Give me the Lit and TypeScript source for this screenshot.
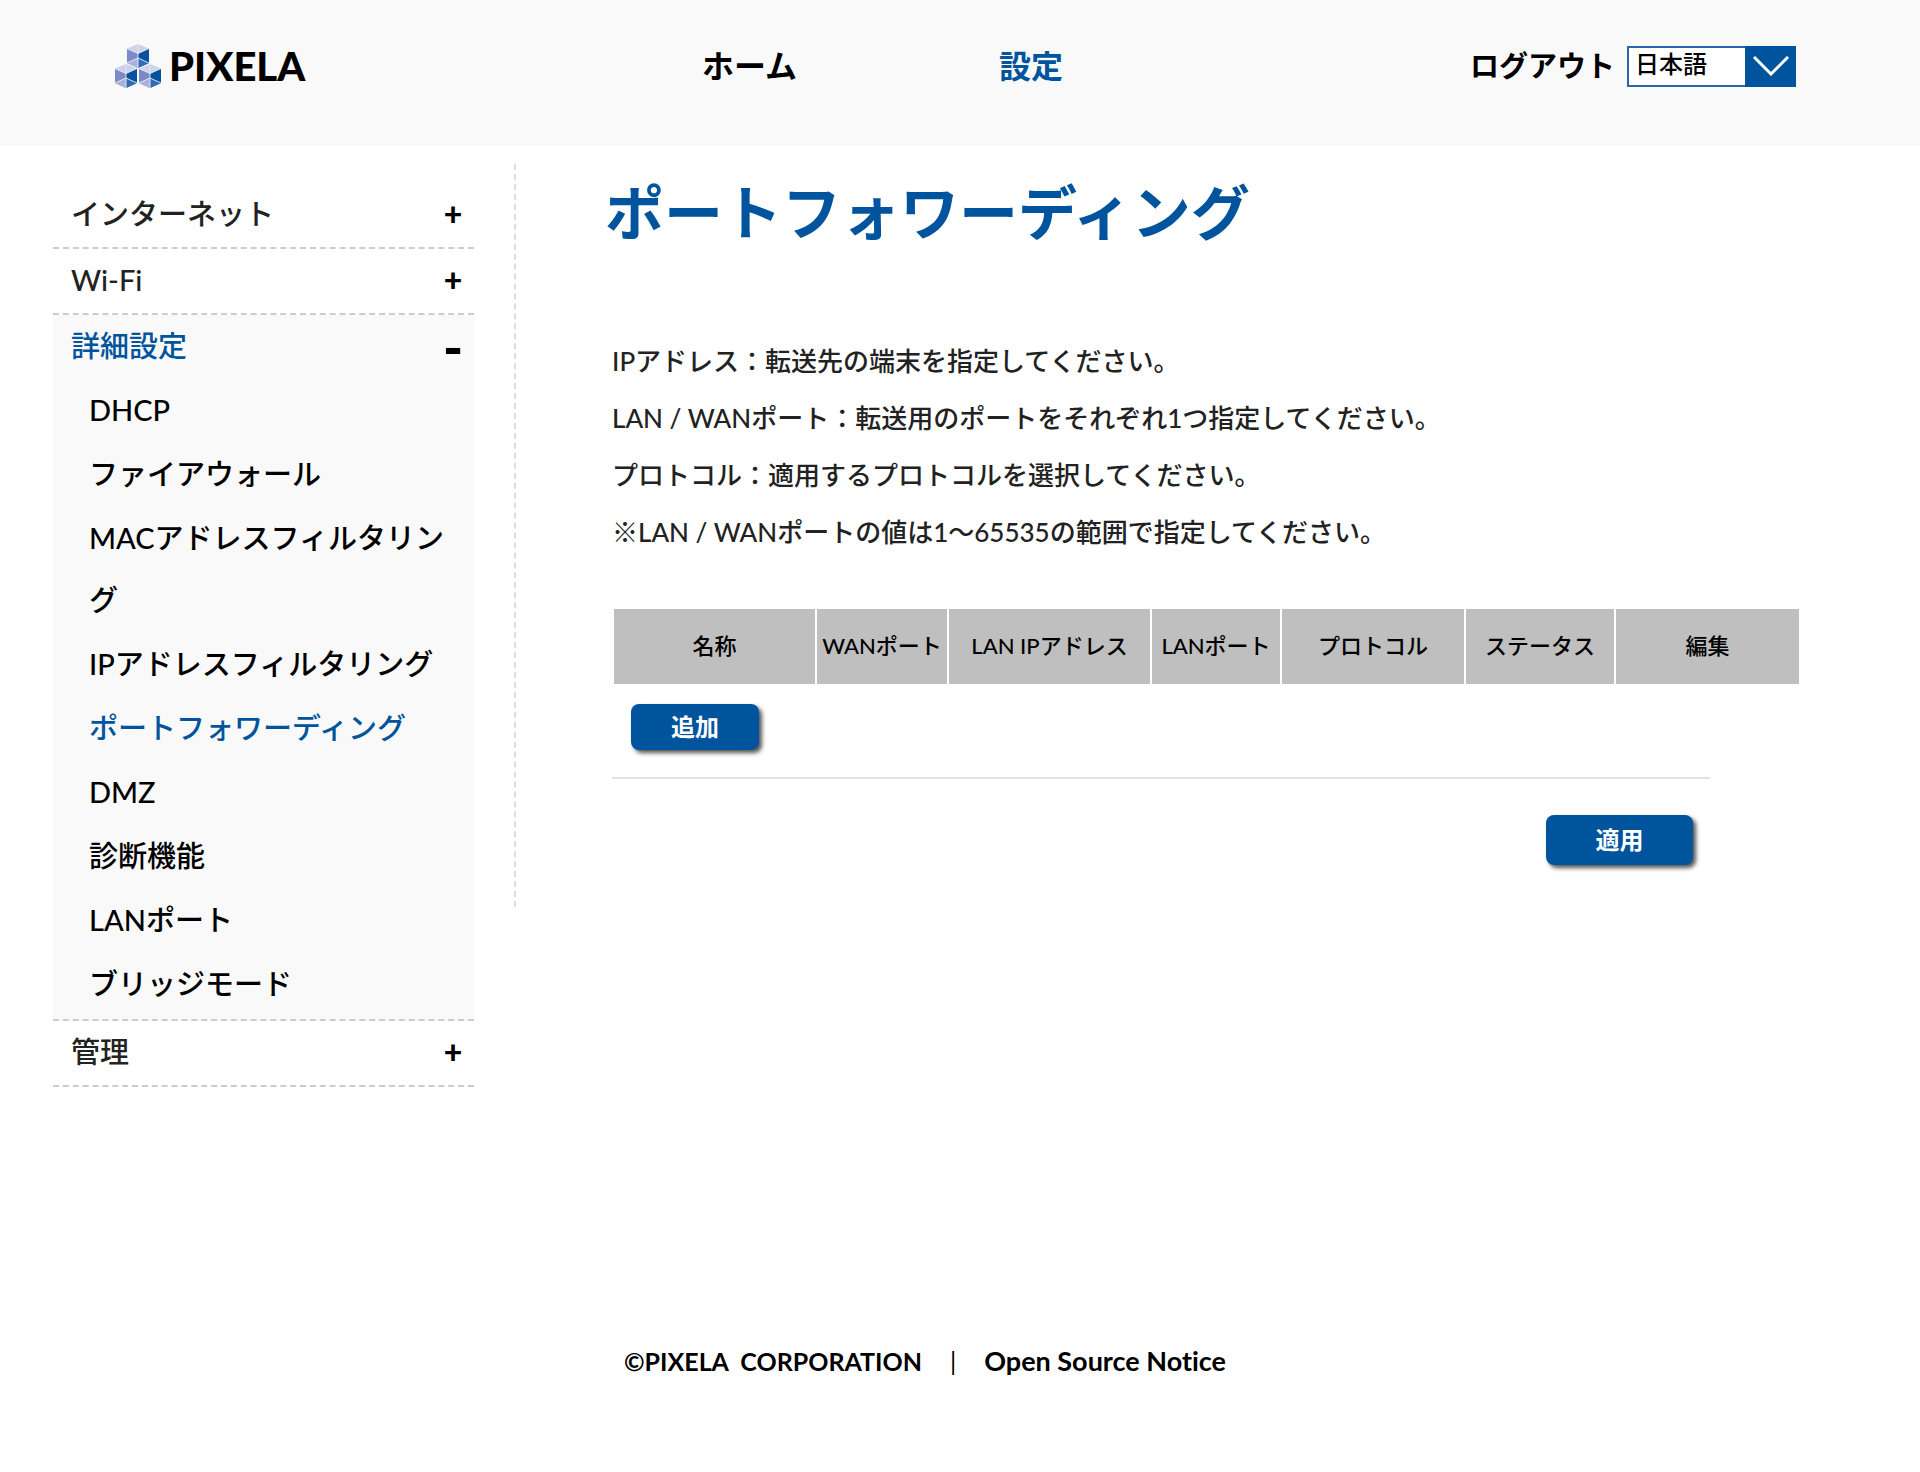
import { LitElement, html, css, svg } from "lit";
import { customElement, state } from "lit/decorators.js";

interface Section {
  label: string;
  children: string[];
}

const SECTIONS: Section[] = [
  { label: "インターネット", children: [] },
  { label: "Wi-Fi", children: [] },
  {
    label: "詳細設定",
    children: [
      "DHCP",
      "ファイアウォール",
      "MACアドレスフィルタリング",
      "IPアドレスフィルタリング",
      "ポートフォワーディング",
      "DMZ",
      "診断機能",
      "LANポート",
      "ブリッジモード",
    ],
  },
  { label: "管理", children: [] },
];

const NOTES = [
  "IPアドレス：転送先の端末を指定してください。",
  "LAN / WANポート：転送用のポートをそれぞれ1つ指定してください。",
  "プロトコル：適用するプロトコルを選択してください。",
  "※LAN / WANポートの値は1～65535の範囲で指定してください。",
];

const COLUMNS = [
  { label: "名称", share: 201 },
  { label: "WANポート", share: 130 },
  { label: "LAN IPアドレス", share: 201 },
  { label: "LANポート", share: 128 },
  { label: "プロトコル", share: 182 },
  { label: "ステータス", share: 148 },
  { label: "編集", share: 183 },
];
const TOTAL = COLUMNS.reduce((sum, c) => sum + c.share, 0);

/* One cube of the logo mark, 22 wide and 24 high. */
const cube = (x: number, y: number) => svg`
  <g transform="translate(${x} ${y})">
    <path d="M11 0 L22 4.5 L11 9.5 L0 4.5 Z" fill="#cdd2ea" />
    <path d="M0 4.5 L11 9.5 V24 L0 19 Z" fill="#7c8bc6" />
    <path d="M22 4.5 L11 9.5 V24 L22 19 Z" fill="#0452a0" />
    <path d="M0 19 L11 14 V24 Z" fill="#a9b2db" />
    <path d="M22 19 L11 14 V24 Z" fill="#2f6db4" />
    <path d="M0 4.5 L11 9.5 L22 4.5 M11 0 V24 M0 19 L11 14 L22 19" fill="none" stroke="#e9ecf6" stroke-width="0.9" />
  </g>`;

@customElement("app-root")
export class AppRoot extends LitElement {
  @state() private open = "詳細設定";
  @state() private page = "ポートフォワーディング";

  static styles = css`
    :host {
      display: flex;
      flex-direction: column;
      min-height: 100vh;
      box-sizing: border-box;
      background: #fff;
      color: #000;
      font-family: Lato, "Noto Sans CJK JP", sans-serif;
      font-size: 29px;
      font-weight: 500;
      font-variant-ligatures: none;
      --blue: #00549e;
    }
    * {
      box-sizing: border-box;
    }
    a {
      color: inherit;
      text-decoration: none;
    }
    button {
      font: inherit;
      color: inherit;
      border: 0;
      cursor: pointer;
    }
    .header {
      display: grid;
      grid-template-columns: 702fr 297fr 471fr 450fr;
      padding: 44px 0 58px;
      background: #f9f9f9;
      line-height: 44px;
    }
    .brand {
      display: flex;
      align-items: center;
      gap: 8px;
      padding-left: 115px;
      font-size: 40px;
      font-weight: 900;
      line-height: 42px;
    }
    .top-link {
      font-size: 32px;
      font-weight: 700;
    }
    .top-link.on {
      color: var(--blue);
    }
    .account {
      display: flex;
      align-items: center;
      gap: 12px;
      white-space: nowrap;
    }
    .logout {
      font-weight: 700;
    }
    .picker {
      display: grid;
      width: 169px;
      height: 41px;
    }
    .picker select {
      grid-area: 1 / 1;
      appearance: none;
      height: 41px;
      margin: 0;
      padding: 0 56px 4px 6px;
      border: 2px solid #2a66ad;
      border-radius: 0;
      background: #fff;
      color: #000;
      font: inherit;
      font-size: 24px;
      line-height: 32px;
    }
    .picker .arrow {
      grid-area: 1 / 1;
      justify-self: end;
      display: grid;
      place-items: center;
      width: 51px;
      background: var(--blue);
      pointer-events: none;
    }
    .body {
      display: grid;
      grid-template-columns: 514fr 1406fr;
      align-items: start;
      padding-top: 18px;
    }
    .side {
      padding: 19px 40px 0 53px;
    }
    .section {
      border-bottom: 2px dashed #ccc;
    }
    .section.on {
      background: #f9f9f9;
      padding-bottom: 2px;
    }
    .toggle {
      display: flex;
      justify-content: space-between;
      width: 100%;
      height: 64px;
      padding: 0 12px 0 18px;
      background: none;
      color: #222;
      line-height: 62px;
      text-align: left;
    }
    .section.on .toggle {
      color: var(--blue);
    }
    .sign {
      display: flex;
      justify-content: center;
      width: 18px;
      color: #000;
      font-weight: 900;
      font-size: 32px;
    }
    .sign.minus {
      font-size: 54px;
      line-height: 64px;
    }
    .sub {
      margin: 0;
      padding: 0 16px 0 36px;
      list-style: none;
      line-height: 62px;
    }
    .sub li {
      padding-bottom: 2px;
    }
    .sub .on {
      color: var(--blue);
    }
    .main {
      border-left: 2px dashed #ddd;
      padding: 0 119px 42px 89px;
    }
    h1 {
      margin: 0 0 71px;
      color: var(--blue);
      font-size: 59px;
      font-weight: 700;
      line-height: 98px;
    }
    .content {
      padding-left: 7px;
    }
    .notes p {
      margin: 0;
      color: #222;
      font-size: 26px;
      line-height: 57px;
    }
    table {
      width: 100%;
      margin-top: 46px;
      border-spacing: 2px;
      table-layout: fixed;
    }
    th {
      height: 75px;
      padding: 0 0 2px;
      background: #bfbfbf;
      font-size: 22px;
      font-weight: 500;
      line-height: 30px;
      white-space: nowrap;
    }
    .actions {
      margin-right: 91px;
    }
    .row {
      display: flex;
      padding: 18px 17px 27px 19px;
      border-bottom: 2px solid #e2e2e2;
    }
    .row.end {
      justify-content: flex-end;
      padding: 36px 17px 0;
      border: 0;
    }
    .btn {
      width: 128px;
      height: 46px;
      padding: 0;
      border-radius: 8px;
      background: var(--blue);
      box-shadow: 3px 3px 4px #555;
      color: #fff;
      font-size: 24px;
      font-weight: 700;
      line-height: 36px;
    }
    .btn.wide {
      width: 147px;
      height: 50px;
    }
    .footer {
      display: flex;
      gap: 28px;
      margin-top: 259px;
      padding: 0 0 97px 32.5%;
      font-size: 25px;
      font-weight: 700;
      line-height: 30px;
      white-space: pre;
    }
    .bar {
      font-weight: 400;
    }
    .notice {
      font-size: 27px;
    }
  `;

  private renderSection(s: Section) {
    const on = s.label === this.open;
    return html`<div class="section ${on ? "on" : ""}">
      <button class="toggle" aria-expanded=${on} @click=${() => (this.open = s.label)}>
        <span>${s.label}</span><span class="sign ${on ? "minus" : ""}">${on ? "-" : "+"}</span>
      </button>
      ${on && s.children.length
        ? html`<ul class="sub">
            ${s.children.map(
              (c) => html`<li>
                <a href="#" class=${c === this.page ? "on" : ""} @click=${() => (this.page = c)}>${c}</a>
              </li>`
            )}
          </ul>`
        : ""}
    </div>`;
  }

  render() {
    return html`
      <header class="header">
        <div class="brand">
          <svg width="46" height="44" viewBox="0 0 46 44" aria-hidden="true">
            ${cube(12, 0)}${cube(0, 20)}${cube(24, 20)}
          </svg>
          <span>PIXELA</span>
        </div>
        <a class="top-link" href="#">ホーム</a>
        <a class="top-link on" href="#">設定</a>
        <div class="account">
          <a class="logout" href="#">ログアウト</a>
          <div class="picker">
            <select aria-label="言語">
              <option>日本語</option>
            </select>
            <span class="arrow" aria-hidden="true">
              <svg width="36" height="20" viewBox="0 0 36 20">
                <path d="M1 1 L18 18 L35 1" fill="none" stroke="#fff" stroke-width="3" />
              </svg>
            </span>
          </div>
        </div>
      </header>
      <div class="body">
        <nav class="side">${SECTIONS.map((s) => this.renderSection(s))}</nav>
        <main class="main">
          <h1>ポートフォワーディング</h1>
          <div class="content">
            <div class="notes">${NOTES.map((n) => html`<p>${n}</p>`)}</div>
            <table>
              <colgroup>
                ${COLUMNS.map((c) => html`<col style="width:${(c.share / TOTAL) * 100}%" />`)}
              </colgroup>
              <thead>
                <tr>
                  ${COLUMNS.map((c) => html`<th scope="col">${c.label}</th>`)}
                </tr>
              </thead>
            </table>
            <div class="actions">
              <div class="row"><button class="btn">追加</button></div>
              <div class="row end"><button class="btn wide">適用</button></div>
            </div>
          </div>
        </main>
      </div>
      <footer class="footer"><span>©PIXELA  CORPORATION</span><span class="bar">|</span><a class="notice" href="#">Open Source Notice</a></footer>
    `;
  }
}
